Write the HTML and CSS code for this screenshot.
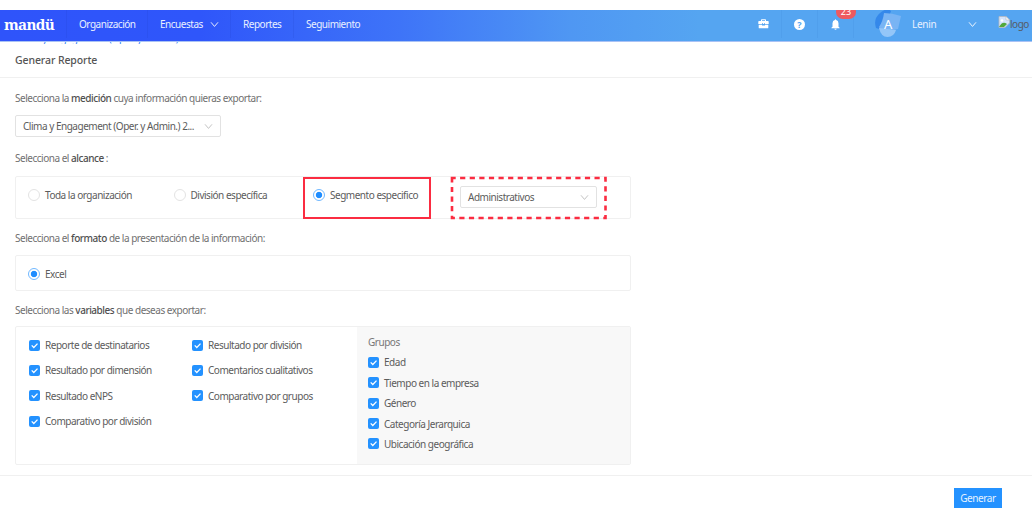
FILE: index.html
```html
<!DOCTYPE html>
<html lang="es">
<head>
<meta charset="utf-8">
<title>Generar Reporte</title>
<link rel="stylesheet" href="styles.css">
</head>
<body>
<svg class="defs" aria-hidden="true">
  <symbol id="chev" viewBox="0 0 10 8"><path d="M1 1.5 5 6.2 9 1.5" fill="none" stroke="currentColor"/></symbol>
  <symbol id="tick" viewBox="0 0 11 11"><path d="M2.700 5.400 4.800 7.500 8.500 3.600" fill="none" stroke="#fff" stroke-width="1.300"/></symbol>
</svg>
<header class="bar">
  <div class="logo">mandü</div>
  <nav class="nav">
    <a class="n-org"><span>Organización</span></a>
    <a class="n-enc"><span>Encuestas</span><svg class="chev"><use href="#chev"/></svg></a>
    <a class="n-rep"><span>Reportes</span></a>
    <a class="n-seg"><span>Seguimiento</span></a>
  </nav>
  <div class="tool t-case"><svg width="11" height="10" viewBox="0 0 11 10"><path d="M3 2V.9Q3 .2 3.700 .2H7.300Q8 .2 8 .9V2H10Q10.700 2 10.700 2.700V5H7V4.300H6V5H5V4.300H4V5H.3V2.700Q.3 2 1 2ZM4 2H7V1.200H4ZM.7 5.800H4V6.600H7V5.800H10.300V8.800Q10.300 9.300 9.700 9.300H1.300Q.7 9.300 .7 8.800Z" fill="#fff" fill-rule="evenodd"/></svg></div>
  <div class="tool t-help"><span class="help">?</span></div>
  <div class="tool t-bell"><svg width="9" height="11" viewBox="0 0 9 11"><path d="M4.500 .2Q5.100 .2 5.100 1Q7.500 1.600 7.500 4.200V7.800L8.600 8.800V9.300H.4V8.800L1.500 7.800V4.200Q1.500 1.600 3.900 1Q3.900 .2 4.500 .2ZM3.300 9.700H5.700Q5.500 10.700 4.500 10.700T3.300 9.700Z" fill="#fff"/></svg><span class="count">23</span></div>
  <div class="user">
    <span class="avatar"><svg width="28" height="28" viewBox="0 0 28 28"><path d="M2 18Q-1 9 6 3T17 1L14 9 5 19Z" fill="#3488ea"/><path d="M10 3Q18 3 27 6L24 19 8 22 5 17Q9 11 10 3Z" fill="#79b4f4"/><path d="M5 18 22 20Q20 27 13.500 27T5 18Z" fill="#94c6f8"/></svg><b>A</b></span>
    <span class="name">Lenin</span><svg class="chev"><use href="#chev"/></svg>
  </div>
  <div class="brand"><svg width="12" height="12" viewBox="0 0 12 12"><path d="M1 .5H8L11.500 4V7L7 11.500H1Z" fill="#d3e3fa" stroke="#b5b9c0" stroke-width=".8"/><path d="M8 .5V4H11.500Z" fill="#fff" stroke="#a8acb3" stroke-width=".5"/><circle cx="4" cy="4.500" r="1.300" fill="#fff"/><path d="M1 11Q4.500 4.500 9 8L6 11Z" fill="#52a83b"/></svg><span>logo</span></div>
</header>
<div class="under"><span>Clima y Engagement (Oper. y Admin.) 2021</span></div>
<h1 class="title"><span>Generar Reporte</span></h1>
<main class="form">
  <p class="label l1">Selecciona la <b>medición</b> cuya información quieras exportar:</p>
  <div class="select s1"><span>Clima y Engagement (Oper. y Admin.) 2...</span><svg class="chev"><use href="#chev"/></svg></div>
  <p class="label l2">Selecciona el <b>alcance</b> :</p>
  <div class="card scope">
    <label class="opt"><i class="radio"></i><span>Toda la organización</span></label>
    <label class="opt"><i class="radio"></i><span>División específica</span></label>
    <label class="opt"><i class="radio on"></i><span>Segmento especifico</span></label>
    <div class="select s2"><span>Administrativos</span><svg class="chev"><use href="#chev"/></svg></div>
    <div class="mark"></div>
    <svg class="mark-dash" width="158" height="44"><rect x="2" y="2" width="153.500" height="40" fill="none" stroke="#fb2c41" stroke-width="2.600" stroke-dasharray="5.200 4.400" stroke-dashoffset="1.500"/></svg>
  </div>
  <p class="label l3">Selecciona el <b>formato</b> de la presentación de la información:</p>
  <div class="card format"><label class="opt"><i class="radio on"></i><span>Excel</span></label></div>
  <p class="label l4">Selecciona las <b>variables</b> que deseas exportar:</p>
  <div class="card vars">
    <div class="col c1">
      <label class="opt"><svg class="check"><use href="#tick"/></svg><span>Reporte de destinatarios</span></label>
      <label class="opt"><svg class="check"><use href="#tick"/></svg><span>Resultado por dimensión</span></label>
      <label class="opt"><svg class="check"><use href="#tick"/></svg><span>Resultado eNPS</span></label>
      <label class="opt"><svg class="check"><use href="#tick"/></svg><span>Comparativo por división</span></label>
    </div>
    <div class="col c2">
      <label class="opt"><svg class="check"><use href="#tick"/></svg><span>Resultado por división</span></label>
      <label class="opt"><svg class="check"><use href="#tick"/></svg><span>Comentarios cualitativos</span></label>
      <label class="opt"><svg class="check"><use href="#tick"/></svg><span>Comparativo por grupos</span></label>
    </div>
    <div class="groups">
      <div class="heading"><span>Grupos</span></div>
      <label class="opt"><svg class="check"><use href="#tick"/></svg><span>Edad</span></label>
      <label class="opt"><svg class="check"><use href="#tick"/></svg><span>Tiempo en la empresa</span></label>
      <label class="opt"><svg class="check"><use href="#tick"/></svg><span>Género</span></label>
      <label class="opt"><svg class="check"><use href="#tick"/></svg><span>Categoría Jerarquica</span></label>
      <label class="opt"><svg class="check"><use href="#tick"/></svg><span>Ubicación geográfica</span></label>
    </div>
  </div>
</main>
<footer class="foot"><button class="go">Generar</button></footer>
</body>
</html>
```
FILE: styles.css
```css
* { box-sizing: border-box; }
body { margin: 0; padding-top: 10px; width: 1032px; height: 511px; overflow: hidden; background: #fff; color: #5c5c5c; font: 10px/14px "Noto Sans", "Open Sans", sans-serif; letter-spacing: -0.48px; white-space: nowrap; }
.defs { position: absolute; width: 0; height: 0; }
.chev { width: 9px; height: 7px; flex: none; }
.bar { display: flex; height: 32px; border-bottom: 1px solid #a9c2f5; overflow: hidden; color: #e9f0ff; background: linear-gradient(90deg, #2f54fa 0, #2f56fa 200px, #3e74f8 400px, #4f97f3 570px, #55a5f1 700px, #55a5f1 100%); }
.logo { width: 66px; padding: 5px 0 0 4px; font: bold 15px/18px "Noto Serif", "DejaVu Serif", serif; letter-spacing: -.7px; color: #fff; }
.nav { display: flex; flex: 1; }
.nav a { display: flex; align-items: center; padding-left: 12px; height: 28px; border-left: 1px solid rgba(20, 50, 170, .1); }
.nav .chev { width: 9px; margin-left: 7px; color: #fff; }
.n-org { width: 81px; }
.n-enc { width: 83px; }
.n-rep { width: 63px; }
.tool { position: relative; display: flex; align-items: center; justify-content: center; width: 36px; height: 28px; border-right: 1px solid rgba(30, 90, 180, .08); }
.help { width: 11px; height: 11px; border-radius: 50%; background: #fff; color: #55a5f1; font-size: 9px; font-weight: bold; letter-spacing: 0; line-height: 11px; text-align: center; }
.count { position: absolute; left: 18px; top: -5px; width: 20px; height: 14px; border-radius: 7px; background: #ed5a61; color: #fff; font-size: 9px; letter-spacing: 0; line-height: 14px; text-align: center; }
.user { display: flex; align-items: center; width: 144px; height: 28px; padding-left: 20px; }
.avatar { position: relative; width: 28px; height: 28px; margin-right: 10px; }
.avatar b { position: absolute; left: 0; top: 5px; width: 28px; font-size: 13px; font-weight: 400; line-height: 18px; color: #fff; text-align: center; }
.user .chev { margin-left: auto; margin-right: 21px; color: #fff; }
.name { letter-spacing: -.3px; }
.brand { display: flex; width: 34px; padding-top: 6px; color: #555c66; font-size: 10px; letter-spacing: -.5px; line-height: 16px; }
.brand svg { flex: none; }
.under { height: 2px; overflow: hidden; padding-left: 15px; color: #2f80f5; letter-spacing: -.3px; }
.under span { display: block; margin-top: -11px; }
.title { display: flex; align-items: center; height: 34px; margin: 0; padding: 0 0 2px 15px; border-bottom: 1px solid #f0f0f0; font-size: 10.500px; font-weight: 500; letter-spacing: -.1px; color: #555; }
.form { display: flex; flex-direction: column; width: 631px; padding-left: 15px; height: 397px; }
.label { margin: 0; color: #707070; }
.label b { font-weight: 500; color: #505050; }
.l1 { padding-top: 13px; height: 37px; }
.l2 { padding-top: 14px; height: 39px; }
.l3 { padding-top: 12px; height: 36px; }
.l4 { padding-top: 12px; height: 35px; }
.select { display: flex; align-items: center; justify-content: space-between; height: 22px; padding: 0 7px; border: 1px solid #e2e2e2; border-radius: 2px; background: #fff; }
.select .chev { color: #bbb; }
.s1 { width: 206px; }
.card { border: 1px solid #f0f0f0; border-radius: 2px; }
.scope { position: relative; display: flex; height: 43px; padding: 11px 0 0 12px; }
.opt { display: flex; align-items: center; height: 14px; }
.scope .opt { width: 145.500px; }
.scope .opt:nth-child(2) { width: 139.500px; }
.radio { width: 12px; height: 12px; flex: none; margin-right: 5px; border: 1px solid #e3e3e3; border-radius: 50%; background: #fff; }
.radio.on { border-color: #70b8ff; background: radial-gradient(circle, #1f8dff 0 2.800px, #fff 3.600px); }
.s2 { position: absolute; left: 444px; top: 9px; width: 137px; }
.mark { position: absolute; left: 287px; top: 0; width: 128px; height: 42px; border: 2px solid #fb2c41; }
.mark-dash { position: absolute; left: 433.500px; top: -1px; }
.format { height: 36px; padding: 11px 0 0 12px; }
.vars { display: flex; height: 139px; }
.col { display: flex; flex-direction: column; gap: 11.400px; padding: 11px 0 0 13px; width: 163px; }
.c2 { width: 178px; }
.check { width: 11px; height: 11px; flex: none; margin-right: 5px; border-radius: 2px; background: #2492ff; }
.groups { display: flex; flex: 1; flex-direction: column; gap: 6.400px; padding: 8px 0 0 11px; background: #f8f8f8; }
.heading { color: #777; }
.foot { display: flex; justify-content: flex-end; height: 36px; padding: 12px 30px 0 0; border-top: 1px solid #f0f0f0; }
.go { width: 48px; height: 20px; padding: 0; border: 0; background: #2492ff; color: #e6f2ff; font: 10px/20px "Noto Sans", sans-serif; letter-spacing: -.4px; }
```
